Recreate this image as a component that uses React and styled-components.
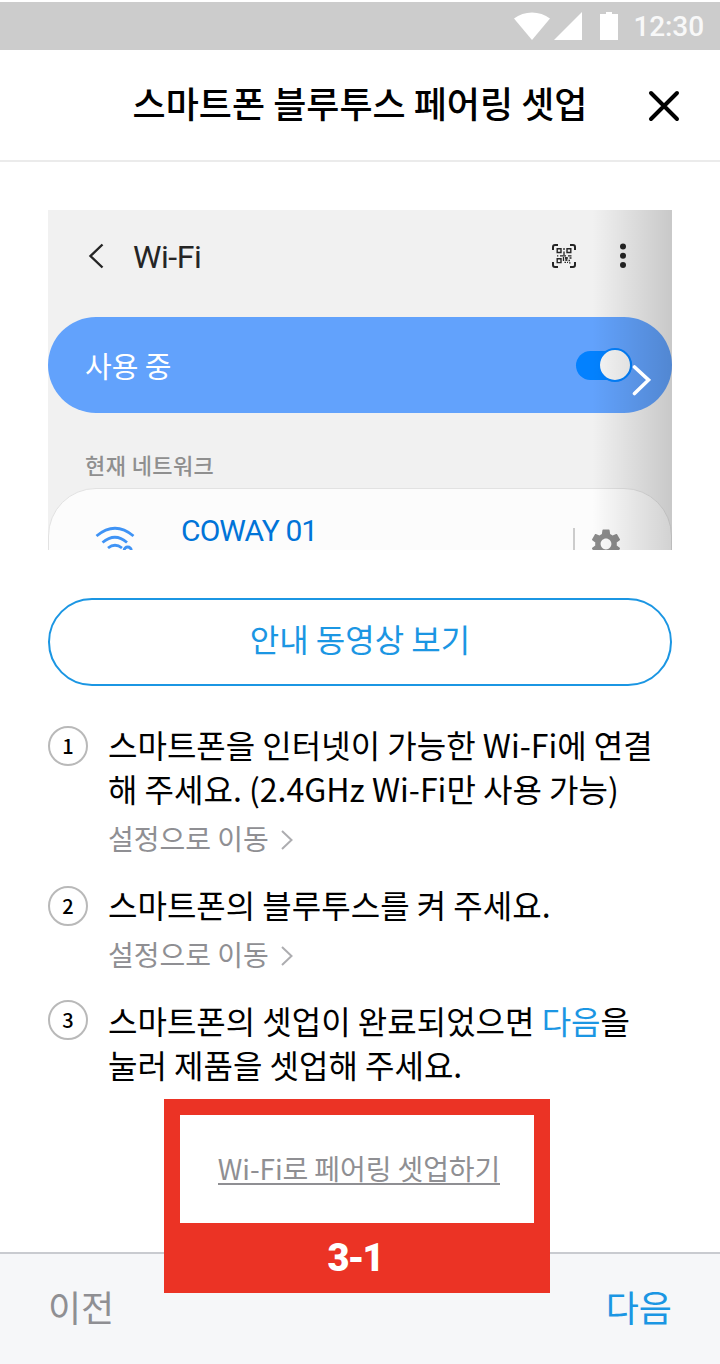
import styled, { createGlobalStyle, css } from 'styled-components';
import { MdSettings } from 'react-icons/md';

const colors = {
  primary: '#1b96e3',
  black: '#000000',
  grey: '#8f8f93',
  border: '#b9b9b9',
  red: '#eb3325',
  footer: '#f6f7f9',
};

const GlobalStyle = createGlobalStyle`
  * {
    box-sizing: border-box;
  }
  body {
    margin: 0;
    background: #ffffff;
    font-family: 'Noto Sans CJK KR', sans-serif;
  }
  button {
    padding: 0;
    border: none;
    background: none;
    font-family: inherit;
    cursor: pointer;
  }
  svg {
    display: block;
    flex: none;
  }
`

const Screen = styled.div`
  position: relative;
  display: flex;
  flex-direction: column;
  width: 720px;
  height: 1364px;
  overflow: hidden;
`

const StatusBar = styled.div`
  display: flex;
  align-items: center;
  justify-content: flex-end;
  height: 50px;
  padding: 2px 16px 0 0;
  border-top: 2px solid #ffffff;
  background: #cccccc;
`

const Clock = styled.span`
  margin-left: 13px;
  font-family: Roboto, sans-serif;
  font-size: 28px;
  font-weight: 500;
  line-height: 46px;
  letter-spacing: -0.1px;
  color: #f8f8f8;
`

const Header = styled.header`
  display: grid;
  grid-template-columns: 72px 1fr 72px;
  align-items: center;
  height: 112px;
  padding-top: 2px;
  border-bottom: 2px solid #ebebeb;
`

const Title = styled.h1`
  grid-column: 2;
  margin: 0;
  padding-bottom: 8px;
  font-size: 36px;
  font-weight: 500;
  line-height: 52px;
  text-align: center;
  white-space: nowrap;
`

const Content = styled.main`
  display: flex;
  flex-direction: column;
  flex: 1;
  padding: 48px 48px 0;
`

const Preview = styled.div`
  position: relative;
  display: flex;
  flex-direction: column;
  height: 340px;
  overflow: hidden;
  background: #f1f1f1;

  & > * {
    flex-shrink: 0;
  }
`

const PreviewShade = styled.div`
  position: absolute;
  inset: 0 0 0 auto;
  width: 80px;
  background: linear-gradient(to right, rgba(0, 0, 0, 0), rgba(0, 0, 0, 0.17));
`

const PreviewArrow = styled.svg`
  position: absolute;
  top: 153px;
  right: 21px;
`

const PreviewBar = styled.div`
  display: flex;
  align-items: center;
  height: 107px;
  padding: 0 46px 15px 40px;
`

const PreviewTitle = styled.span`
  flex: 1;
  margin-left: 28px;
  padding-top: 2px;
  font-family: Roboto, sans-serif;
  font-size: 32px;
  line-height: 40px;
  letter-spacing: -0.4px;
  color: #252525;
`

const PreviewActions = styled.div`
  display: flex;
  align-items: center;
  gap: 44px;
`

const WifiToggle = styled.div`
  display: flex;
  align-items: center;
  justify-content: space-between;
  height: 96px;
  padding: 0 40px 0 37px;
  border-radius: 48px;
  background: #62a2fc;
  font-size: 29px;
  line-height: 42px;
  color: #ffffff;
`

const Switch = styled.div`
  display: flex;
  align-items: center;
  justify-content: flex-end;
  width: 56px;
  height: 29px;
  border-radius: 15px;
  background: #0381fe;
`

const Knob = styled.div`
  flex: none;
  width: 34px;
  height: 34px;
  border: 2px solid #0381fe;
  border-radius: 50%;
  background: #f5f5f5;
`

const PreviewLabel = styled.div`
  height: 75px;
  padding: 35px 37px 0;
  font-size: 22px;
  font-weight: 500;
  line-height: 32px;
  letter-spacing: 0.4px;
  color: #8f8f8f;
`

const NetworkCard = styled.div`
  display: flex;
  height: 120px;
  padding: 0 47px 0 46px;
  border: 1px solid #e2e2e2;
  border-radius: 48px;
  background: #fcfcfc;
`

const NetworkName = styled.span`
  flex: 1;
  padding: 24px 0 0 46px;
  font-family: Roboto, sans-serif;
  font-size: 30px;
  line-height: 36px;
  letter-spacing: -0.9px;
  color: #0074d8;
`

const Divider = styled.i`
  width: 2px;
  margin: 39px 13px 0 0;
  background: #cccccc;
`

const Gear = styled(MdSettings)`
  width: 36px;
  height: 36px;
  margin-top: 37px;
  color: #8b8b8b;
`

const VideoButton = styled.button`
  height: 88px;
  margin-top: 48px;
  padding-bottom: 8px;
  border: 2px solid ${colors.primary};
  border-radius: 44px;
  font-size: 32px;
  color: ${colors.primary};
`

const Steps = styled.ol`
  display: flex;
  flex-direction: column;
  margin: 36px 0 0;
  padding: 0;
  list-style: none;
`

const Step = styled.li`
  display: flex;
  gap: 20px;
  margin-bottom: 24px;
`

const StepNumber = styled.span`
  display: flex;
  flex: none;
  align-items: center;
  justify-content: center;
  width: 40px;
  height: 40px;
  margin-top: ${({ $raised }) => ($raised ? '2px' : '4px')};
  border: 2px solid ${colors.border};
  border-radius: 50%;
  font-size: 20px;
  font-weight: 500;
  line-height: 36px;
`

const StepText = styled.p`
  margin: 0;
  font-size: 32px;
  line-height: 44px;
  white-space: pre-line;
  color: ${colors.black};
`

const Accent = styled.span`
  color: ${colors.primary};
`

const linkText = css`
  font-size: 28px;
  line-height: 40px;
  color: ${colors.grey};
`

const SettingsLink = styled.button`
  ${linkText}
  display: flex;
  align-items: center;
  gap: 12px;
  margin-top: 8px;

  svg {
    margin-top: 4px;
  }
`

const Footer = styled.footer`
  display: flex;
  justify-content: space-between;
  height: 112px;
  padding: 0 48px;
  border-top: 2px solid #c9cbd0;
  background: ${colors.footer};
`

const FooterButton = styled.button`
  height: 104px;
  font-size: 36px;
  color: ${({ $primary }) => ($primary ? colors.primary : colors.grey)};
`

// callout laid over the content and the footer
const Callout = styled.div`
  position: absolute;
  top: 1099px;
  left: 164px;
  display: flex;
  flex-direction: column;
  width: 386px;
  height: 194px;
  padding: 16px 16px 0;
  background: ${colors.red};
`

const CalloutBody = styled.div`
  display: flex;
  flex: none;
  justify-content: center;
  height: 108px;
  padding: 33px 0 0 4px;
  background: #ffffff;
`

const PairingLink = styled.a`
  ${linkText}
  height: 37px;
  border-bottom: 2px solid ${colors.grey};
  letter-spacing: -0.1px;
  white-space: nowrap;
`

const CalloutLabel = styled.span`
  padding-right: 4px;
  font-family: Roboto, sans-serif;
  font-size: 38px;
  font-weight: 900;
  line-height: 70px;
  letter-spacing: -2px;
  text-align: center;
  color: #ffffff;
`

const StatusIcons = () => (
  <svg width="106" height="30" viewBox="0 0 106 30" fill="#ffffff">
    <path d="M0 6.6C10 -1.6 26 -1.6 36 6.6L18 28Z" />
    <path d="M40 28L68 0V28Z" />
    <path d="M86 2H92V0H98V2H104V28H86Z" />
  </svg>
)

const CloseIcon = () => (
  <svg width="32" height="32" viewBox="0 0 32 32" fill="none" stroke="#000000" strokeWidth="4" strokeLinecap="round">
    <path d="M3 3L29 29M29 3L3 29" />
  </svg>
)

const BackIcon = () => (
  <svg width="17" height="26" viewBox="0 0 17 26" fill="none" stroke="#252525" strokeWidth="2.4">
    <path d="M14.5 1.5L2.5 13L14.5 24.5" />
  </svg>
)

const QrIcon = () => (
  <svg width="24" height="24" viewBox="0 0 24 24" fill="none" stroke="#252525">
    <path strokeWidth="2" d="M1 6V3Q1 1 3 1H6M18 1H21Q23 1 23 3V6M23 18V21Q23 23 21 23H18M6 23H3Q1 23 1 21V18" />
    <path strokeWidth="1.4" d="M5.2 4.7H9V8.5H5.2ZM15 4.7H18.8V8.5H15ZM5.2 14.8H9V18.6H5.2Z" />
    <path strokeWidth="1.3" d="M12 4V6M12 7.5V11M5 11.8H6.3M8 11.8H14M16 11.8H19.5M11.5 13V17M13 14H16M17.5 14H19.5M14 16H15.5M16.5 16.5H18M12.5 18.4H14M15 18.4H16M17 18.8H18.5M14 13V17" />
  </svg>
)

const MoreIcon = () => (
  <svg width="6" height="26" viewBox="0 0 6 26" fill="#252525">
    <circle cx="3" cy="3.5" r="3" />
    <circle cx="3" cy="12.8" r="3" />
    <circle cx="3" cy="22" r="3" />
  </svg>
)

const WifiIcon = () => (
  <svg width="40" height="64" viewBox="0 0 40 64" fill="none" stroke="#3f93f5" strokeWidth="2.8">
    <path d="M1.5 47Q20 31.5 38.5 47" />
    <path d="M7.5 53.5Q20 43 32 53.5" />
    <path d="M13 59Q20 53.5 27 59" />
    <circle cx="32.7" cy="61.6" r="3.6" />
  </svg>
)

const ChevronIcon = () => (
  <svg width="12" height="20" viewBox="0 0 12 20" fill="none" stroke="#adadb0" strokeWidth="2">
    <path d="M1 1L10.5 10L1 19" />
  </svg>
)

const steps = [
  {
    text: '스마트폰을 인터넷이 가능한 Wi-Fi에 연결\n해 주세요. (2.4GHz Wi-Fi만 사용 가능)',
    link: '설정으로 이동',
  },
  {
    text: '스마트폰의 블루투스를 켜 주세요.',
    link: '설정으로 이동',
  },
  {
    text: (
      <>
        스마트폰의 셋업이 완료되었으면 <Accent>다음</Accent>을{'\n'}눌러 제품을 셋업해 주세요.
      </>
    ),
  },
]

const WifiPreview = () => (
  <Preview>
    <PreviewBar>
      <BackIcon />
      <PreviewTitle>Wi-Fi</PreviewTitle>
      <PreviewActions>
        <QrIcon />
        <MoreIcon />
      </PreviewActions>
    </PreviewBar>
    <WifiToggle>
      사용 중
      <Switch>
        <Knob />
      </Switch>
    </WifiToggle>
    <PreviewLabel>현재 네트워크</PreviewLabel>
    <NetworkCard>
      <WifiIcon />
      <NetworkName>COWAY 01</NetworkName>
      <Divider />
      <Gear />
    </NetworkCard>
    <PreviewShade />
    <PreviewArrow width="22" height="34" viewBox="0 0 22 34" fill="none" stroke="#ffffff" strokeWidth="3.6" strokeLinecap="round">
      <path d="M5.5 4L19.5 17L5.5 30.5" />
    </PreviewArrow>
  </Preview>
)

const App = () => {
  return (
    <>
      <GlobalStyle />
      <Screen>
        <StatusBar>
          <StatusIcons />
          <Clock>12:30</Clock>
        </StatusBar>
        <Header>
          <Title>스마트폰 블루투스 페어링 셋업</Title>
          <button aria-label="닫기">
            <CloseIcon />
          </button>
        </Header>
        <Content>
          <WifiPreview />
          <VideoButton>안내 동영상 보기</VideoButton>
          <Steps>
            {steps.map((step, index) => (
              <Step key={index}>
                <StepNumber $raised={!step.link}>{index + 1}</StepNumber>
                <div>
                  <StepText>{step.text}</StepText>
                  {step.link && (
                    <SettingsLink>
                      {step.link}
                      <ChevronIcon />
                    </SettingsLink>
                  )}
                </div>
              </Step>
            ))}
          </Steps>
        </Content>
        <Footer>
          <FooterButton>이전</FooterButton>
          <FooterButton $primary>다음</FooterButton>
        </Footer>
        <Callout>
          <CalloutBody>
            <PairingLink>Wi-Fi로 페어링 셋업하기</PairingLink>
          </CalloutBody>
          <CalloutLabel>3-1</CalloutLabel>
        </Callout>
      </Screen>
    </>
  )
}

export default App;
